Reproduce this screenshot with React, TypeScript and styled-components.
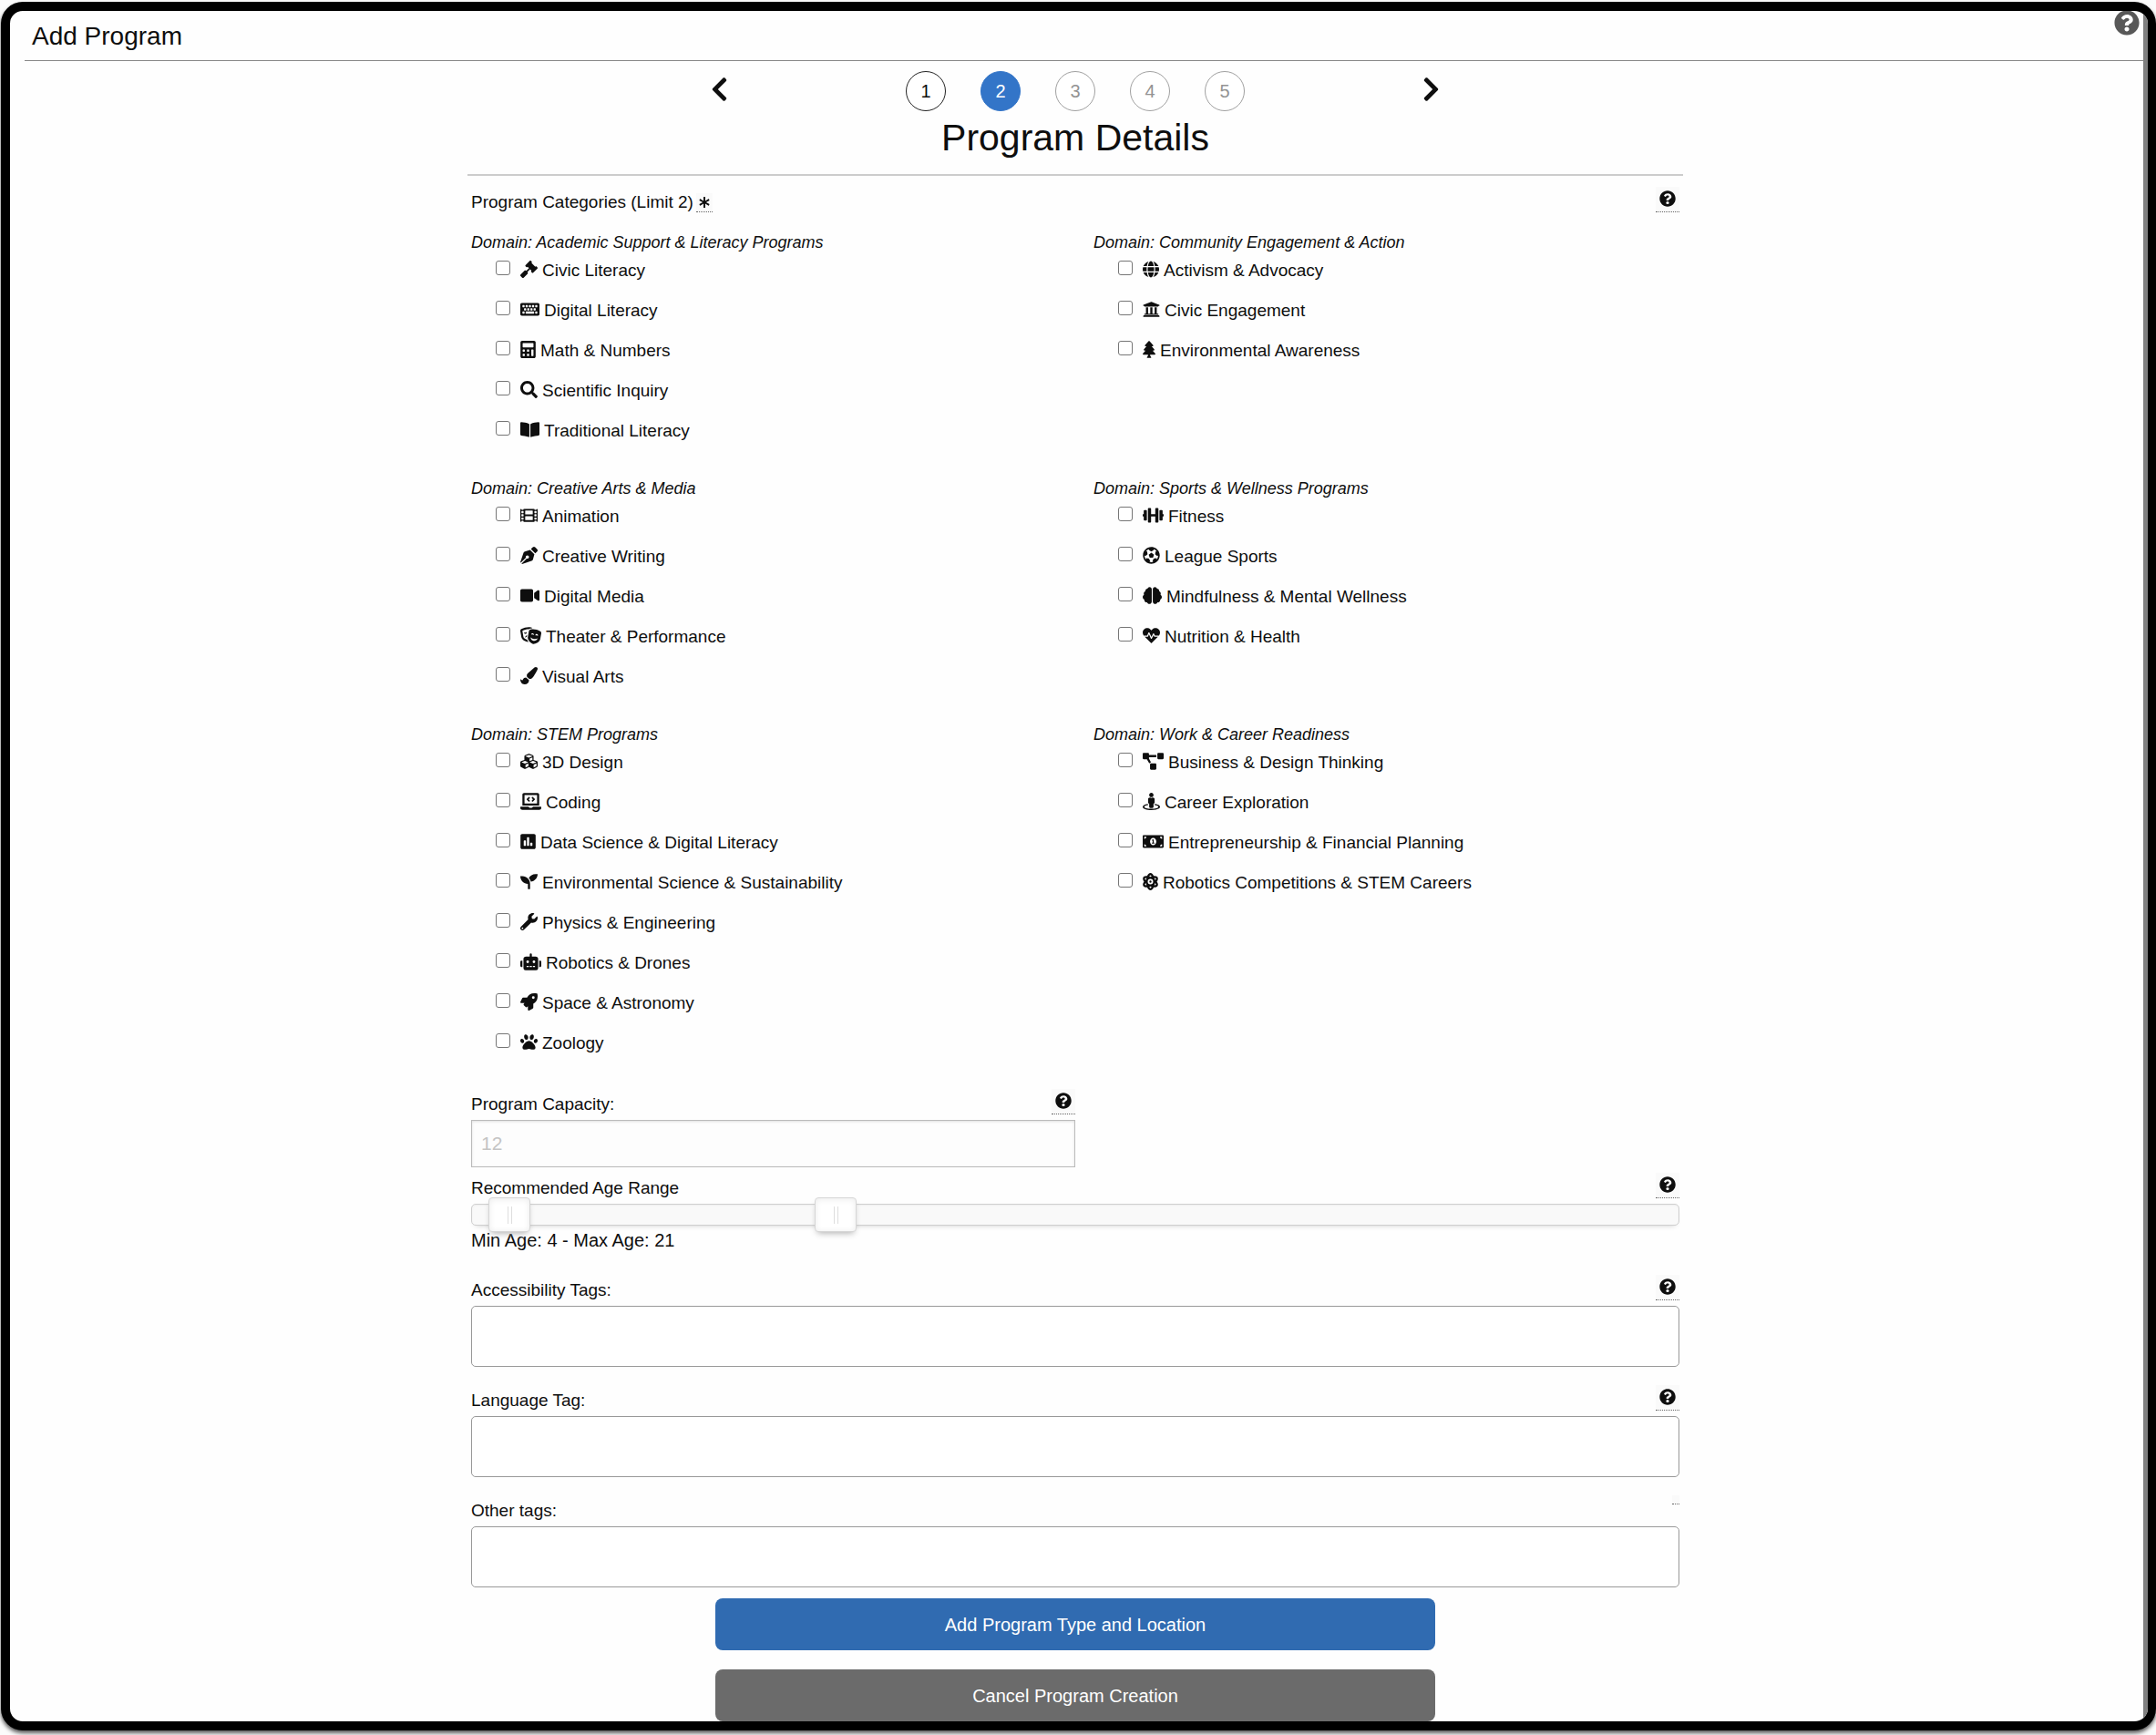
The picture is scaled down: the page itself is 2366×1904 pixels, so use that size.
import React, { useState } from "react";
import styled, { createGlobalStyle, css } from "styled-components";
import type { IconType } from "react-icons";
import {
  FaAsterisk, FaAtom, FaBookOpen, FaBrain, FaCalculator, FaChevronLeft, FaChevronRight, FaCubes,
  FaDumbbell, FaFilm, FaFutbol, FaGavel, FaGlobe, FaHeartbeat, FaKeyboard, FaLaptopCode,
  FaMoneyBillAlt, FaPaintBrush, FaPaw, FaPenNib, FaPoll, FaProjectDiagram, FaQuestionCircle,
  FaRobot, FaRocket, FaSearch, FaSeedling, FaStreetView, FaTheaterMasks, FaTree, FaUniversity,
  FaVideo, FaWrench,
} from "react-icons/fa";

const ink = "#0e0e0e";
const AGE_MIN = 2;
const AGE_MAX = 65;

const GlobalStyle = createGlobalStyle`
  *, *::before, *::after { box-sizing: border-box; }
  body {
    margin: 0;
    background: #fbfbfb;
    color: ${ink};
    font: 19px/22px "Liberation Sans", Arial, Helvetica, sans-serif;
  }
  button, input { font-family: inherit; color: inherit; }
`;

const Frame = styled.div`
  position: relative;
  margin: 2px 0 5px 1px;
  border: solid #000;
  border-width: 10px 9px 10px 10px;
  border-radius: 24px;
  overflow: hidden;
  background: #fefefe;
  box-shadow: 0 3px 4px rgba(0, 0, 0, 0.65);
`;

const Scroller = styled.div`
  border-right: 5px solid #808080;
`;

const Header = styled.header`
  display: flex;
  align-items: center;
  height: 55px;
  margin-left: 16px;
  padding: 2px 8px 0;
  border-bottom: 1px solid #888;
`;

const PageTitle = styled.h1`
  margin: 0;
  font-size: 28px;
  line-height: 32px;
  font-weight: 400;
`;

const PageHelp = styled.button`
  position: absolute;
  top: -1px;
  right: 9px;
  display: flex;
  padding: 0;
  border: 0;
  background: none;
  color: #585858;
  font-size: 28px;
`;

const Content = styled.main`
  display: flex;
  flex-direction: column;
  align-items: center;
  padding: 11px 3px 0 0;
`;

const StepNav = styled.nav`
  display: flex;
  justify-content: space-between;
  width: 100%;
  max-width: 800px;
`;

const Arrow = styled.button`
  display: flex;
  align-items: center;
  height: 40px;
  padding: 0;
  border: 0;
  background: none;
  svg { width: 19px; height: 30px; }
`;

const Steps = styled.ol`
  display: flex;
  gap: 38px;
  margin: 0;
  padding: 0;
  list-style: none;
`;

type StepState = "done" | "current" | "todo";

const stepLook = {
  done: css`border-color: #222; background: #fff; color: ${ink};`,
  current: css`border-color: #3375c8; background: #3375c8; color: #fff;`,
  todo: css`border-color: #a0a0a0; background: #fff; color: #939393;`,
};

const StepButton = styled.button<{ $state: StepState }>`
  display: block;
  width: 44px;
  height: 44px;
  padding: 0;
  border: 1px solid;
  border-radius: 50%;
  font-size: 20px;
  line-height: 24px;
  ${({ $state }) => stepLook[$state]}
`;

const StepTitle = styled.h2`
  margin: 5px 0 16px;
  font-size: 41px;
  line-height: 48px;
  font-weight: 400;
  text-align: center;
`;

const Form = styled.form`
  width: 100%;
  max-width: 1334px;
  padding: 12px 4px 0;
  border-top: 2px solid #ccc;
`;

const LabelRow = styled.div`
  display: flex;
  justify-content: space-between;
  align-items: flex-end;
  height: 28px;
  margin-bottom: 6px;
`;

const LabelText = styled.label`
  line-height: 22px;
`;

const Caption = styled.div`
  display: flex;
  align-items: flex-end;
  gap: 3px;
`;

const Hint = styled.button`
  align-self: flex-start;
  display: flex;
  padding: 4px 4px 5px;
  border: 0;
  border-bottom: 1px dotted #666;
  background: #fafafa;
  font-size: 18px;
`;

const RequiredMark = styled.abbr`
  display: flex;
  padding: 4px 3px;
  border-bottom: 1px dotted #666;
  background: #fafafa;
  font-size: 12px;
`;

const Domains = styled.div`
  display: grid;
  grid-template-columns: 1fr 1fr;
  gap: 19px 40px;
  margin: 22px 0 17px;
`;

const Domain = styled.fieldset`
  min-width: 0;
  margin: 0;
  padding: 0;
  border: 0;
`;

const DomainName = styled.legend`
  height: 31px;
  padding: 0;
  font-size: 18px;
  line-height: 22px;
  font-style: italic;
`;

const Choices = styled.ul`
  margin: 0;
  padding: 0 0 0 27px;
  list-style: none;
`;

const Choice = styled.li`
  display: flex;
  align-items: flex-start;
  height: 44px;
`;

const Check = styled.input`
  appearance: none;
  width: 16px;
  height: 16px;
  margin: 0 11px 0 0;
  border: 1px solid #767676;
  border-radius: 3px;
  background: #fff;
  &:checked { background: #3375c8; border-color: #3375c8; }
`;

const ChoiceLabel = styled.label<{ $iconWidth: number }>`
  display: flex;
  align-items: flex-start;
  gap: 5px;
  line-height: 22px;
  svg { flex: none; width: ${({ $iconWidth }) => $iconWidth}px; height: 19px; }
`;

const HalfField = styled.div`
  width: 50%;
  margin-bottom: 6px;
`;

const NumberBox = styled.input`
  display: block;
  width: 100%;
  height: 52px;
  padding: 0 10px;
  border: 1px solid #bbb;
  border-radius: 0;
  background: #fdfdfd;
  box-shadow: inset 0 1px 3px rgba(0, 0, 0, 0.12);
  font-size: 21px;
  &::placeholder { color: #c4c4c4; opacity: 1; }
`;

const Track = styled.div`
  position: relative;
  height: 24px;
  border: 1px solid #cfcfcf;
  border-radius: 5px;
  background: #f9f9f9;
  box-shadow: inset 0 1px 2px #eee, 0 4px 6px -5px #bbb;
`;

const thumb = css`
  appearance: none;
  pointer-events: auto;
  width: 46px;
  height: 38px;
  border: 1px solid #d6d6d6;
  border-radius: 4px;
  background:
    linear-gradient(#dedede, #dedede) 20px 9px / 1px 19px no-repeat,
    linear-gradient(#dedede, #dedede) 24px 9px / 1px 19px no-repeat,
    #fff;
  box-shadow: inset 0 1px 7px #ebebeb, 0 4px 7px -3px #aaa;
`;

const AgeHandle = styled.input`
  position: absolute;
  top: -8px;
  left: -24px;
  width: calc(100% + 48px);
  height: 38px;
  margin: 0;
  appearance: none;
  background: none;
  pointer-events: none;
  &::-webkit-slider-thumb { ${thumb} }
  &::-moz-range-thumb { ${thumb} }
`;

const AgeSummary = styled.p`
  margin: 4px 0 26px;
  font-size: 20px;
  line-height: 24px;
`;

const TagBox = styled.input`
  display: block;
  width: 100%;
  height: 67px;
  padding: 0 10px;
  border: 1px solid #999;
  border-radius: 5px;
  background: #fff;
  font-size: 20px;
`;

const TagFields = styled.div`
  display: flex;
  flex-direction: column;
  gap: 20px;
`;

const Actions = styled.div`
  display: flex;
  flex-direction: column;
  gap: 21px;
  width: 100%;
  max-width: 790px;
  margin: 12px auto 0;
`;

const ActionButton = styled.button<{ $tone: string }>`
  height: 57px;
  padding: 0 20px;
  border: 0;
  border-radius: 8px;
  background: ${({ $tone }) => $tone};
  color: #fff;
  font-size: 20px;
  line-height: 24px;
`;

type DomainItem = [icon: IconType, text: string, iconWidth: number];
type DomainData = { name: string; items: DomainItem[] };

const domains: DomainData[] = [
  {
    name: "Academic Support & Literacy Programs",
    items: [
      [FaGavel, "Civic Literacy", 19],
      [FaKeyboard, "Digital Literacy", 21],
      [FaCalculator, "Math & Numbers", 17],
      [FaSearch, "Scientific Inquiry", 19],
      [FaBookOpen, "Traditional Literacy", 21],
    ],
  },
  {
    name: "Community Engagement & Action",
    items: [
      [FaGlobe, "Activism & Advocacy", 18],
      [FaUniversity, "Civic Engagement", 19],
      [FaTree, "Environmental Awareness", 14],
    ],
  },
  {
    name: "Creative Arts & Media",
    items: [
      [FaFilm, "Animation", 19],
      [FaPenNib, "Creative Writing", 19],
      [FaVideo, "Digital Media", 21],
      [FaTheaterMasks, "Theater & Performance", 23],
      [FaPaintBrush, "Visual Arts", 19],
    ],
  },
  {
    name: "Sports & Wellness Programs",
    items: [
      [FaDumbbell, "Fitness", 23],
      [FaFutbol, "League Sports", 19],
      [FaBrain, "Mindfulness & Mental Wellness", 21],
      [FaHeartbeat, "Nutrition & Health", 19],
    ],
  },
  {
    name: "STEM Programs",
    items: [
      [FaCubes, "3D Design", 19],
      [FaLaptopCode, "Coding", 23],
      [FaPoll, "Data Science & Digital Literacy", 17],
      [FaSeedling, "Environmental Science & Sustainability", 19],
      [FaWrench, "Physics & Engineering", 19],
      [FaRobot, "Robotics & Drones", 23],
      [FaRocket, "Space & Astronomy", 19],
      [FaPaw, "Zoology", 19],
    ],
  },
  {
    name: "Work & Career Readiness",
    items: [
      [FaProjectDiagram, "Business & Design Thinking", 23],
      [FaStreetView, "Career Exploration", 19],
      [FaMoneyBillAlt, "Entrepreneurship & Financial Planning", 23],
      [FaAtom, "Robotics Competitions & STEM Careers", 17],
    ],
  },
];

const steps: StepState[] = ["done", "current", "todo", "todo", "todo"];

const tagFields = [
  { id: "accessibility-tags", label: "Accessibility Tags:", hint: true },
  { id: "language-tag", label: "Language Tag:", hint: true },
  { id: "other-tags", label: "Other tags:", hint: false },
];

const HelpHint = () => (
  <Hint type="button" aria-label="Help">
    <FaQuestionCircle />
  </Hint>
);

const DomainGroup = ({ name, items }: DomainData) => (
  <Domain>
    <DomainName>Domain: {name}</DomainName>
    <Choices>
      {items.map(([Icon, text, iconWidth]) => {
        const id = text.toLowerCase().replace(/[^a-z0-9]+/g, "-");
        return (
          <Choice key={id}>
            <Check type="checkbox" id={id} />
            <ChoiceLabel htmlFor={id} $iconWidth={iconWidth}>
              <Icon />
              {text}
            </ChoiceLabel>
          </Choice>
        );
      })}
    </Choices>
  </Domain>
);

export default function App() {
  const [minAge, setMinAge] = useState(4);
  const [maxAge, setMaxAge] = useState(21);

  return (
    <>
      <GlobalStyle />
      <Frame>
        <Scroller>
          <Header>
            <PageTitle>Add Program</PageTitle>
          </Header>
          <Content>
            <StepNav aria-label="Steps">
              <Arrow type="button" aria-label="Previous step"><FaChevronLeft /></Arrow>
              <Steps>
                {steps.map((state, i) => (
                  <li key={i}>
                    <StepButton type="button" $state={state}>{i + 1}</StepButton>
                  </li>
                ))}
              </Steps>
              <Arrow type="button" aria-label="Next step"><FaChevronRight /></Arrow>
            </StepNav>
            <StepTitle>Program Details</StepTitle>
            <Form onSubmit={(e) => e.preventDefault()}>
              <LabelRow>
                <Caption>
                  <span>Program Categories (Limit 2)</span>
                  <RequiredMark aria-label="Required"><FaAsterisk /></RequiredMark>
                </Caption>
                <HelpHint />
              </LabelRow>
              <Domains>
                {domains.map((d) => <DomainGroup key={d.name} {...d} />)}
              </Domains>
              <HalfField>
                <LabelRow>
                  <LabelText htmlFor="capacity">Program Capacity:</LabelText>
                  <HelpHint />
                </LabelRow>
                <NumberBox id="capacity" type="text" inputMode="numeric" placeholder="12" />
              </HalfField>
              <LabelRow>
                <LabelText htmlFor="min-age">Recommended Age Range</LabelText>
                <HelpHint />
              </LabelRow>
              <Track>
                <AgeHandle
                  id="min-age"
                  type="range"
                  min={AGE_MIN}
                  max={AGE_MAX}
                  value={minAge}
                  onChange={(e) => setMinAge(Math.min(Number(e.target.value), maxAge))}
                />
                <AgeHandle
                  aria-label="Maximum age"
                  type="range"
                  min={AGE_MIN}
                  max={AGE_MAX}
                  value={maxAge}
                  onChange={(e) => setMaxAge(Math.max(Number(e.target.value), minAge))}
                />
              </Track>
              <AgeSummary>Min Age: {minAge} - Max Age: {maxAge}</AgeSummary>
              <TagFields>
                {tagFields.map(({ id, label, hint }) => (
                  <div key={id}>
                    <LabelRow>
                      <LabelText htmlFor={id}>{label}</LabelText>
                      {hint ? <HelpHint /> : <Hint type="button" aria-label="Help" />}
                    </LabelRow>
                    <TagBox id={id} type="text" />
                  </div>
                ))}
              </TagFields>
              <Actions>
                <ActionButton type="submit" $tone="#306bb1">Add Program Type and Location</ActionButton>
                <ActionButton type="button" $tone="#6b6b6b">Cancel Program Creation</ActionButton>
              </Actions>
            </Form>
          </Content>
        </Scroller>
        <PageHelp type="button" aria-label="Page help"><FaQuestionCircle /></PageHelp>
      </Frame>
    </>
  );
}
